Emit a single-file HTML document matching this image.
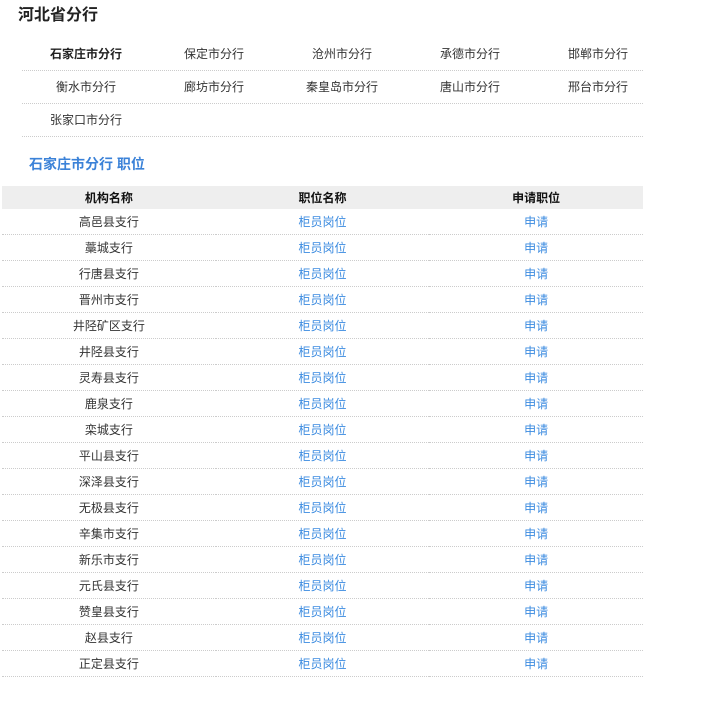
<!DOCTYPE html>
<html><head><meta charset="utf-8"><style>
body{margin:0;background:#fff;font-family:"Liberation Sans","Noto Sans CJK SC",sans-serif;font-size:12px;color:#333;}
h1{position:absolute;left:18px;top:5px;margin:0;font-size:16px;font-weight:bold;color:#222;line-height:22px;}
.grid{position:absolute;left:22px;top:38px;width:621px;}
.row{height:32px;border-bottom:1px dotted #ccc;position:relative;}
.row span{position:absolute;top:0;line-height:32px;width:128px;text-align:center;}
.b{font-weight:bold;color:#222}
h2{position:absolute;left:29px;top:153px;margin:0;font-size:14px;color:#3b82d8;font-weight:bold;line-height:22px;}
table{position:absolute;left:2px;top:186px;width:641px;border-collapse:collapse;}
th{background:#eee;height:23px;font-weight:bold;color:#111;padding:0;width:214px;}
td{height:25px;text-align:center;padding:0;border-bottom:1px dotted #ccc;}
a{color:#3b8be0;text-decoration:none}
</style></head><body>
<h1>河北省分行</h1>
<div class="grid">
<div class="row"><span class="b" style="left:0">石家庄市分行</span><span style="left:128px">保定市分行</span><span style="left:256px">沧州市分行</span><span style="left:384px">承德市分行</span><span style="left:512px">邯郸市分行</span></div>
<div class="row"><span style="left:0">衡水市分行</span><span style="left:128px">廊坊市分行</span><span style="left:256px">秦皇岛市分行</span><span style="left:384px">唐山市分行</span><span style="left:512px">邢台市分行</span></div>
<div class="row"><span style="left:0">张家口市分行</span></div>
</div>
<h2>石家庄市分行 职位</h2>
<table>
<tr><th>机构名称</th><th>职位名称</th><th>申请职位</th></tr>
<tr><td>高邑县支行</td><td><a>柜员岗位</a></td><td><a>申请</a></td></tr>
<tr><td>藁城支行</td><td><a>柜员岗位</a></td><td><a>申请</a></td></tr>
<tr><td>行唐县支行</td><td><a>柜员岗位</a></td><td><a>申请</a></td></tr>
<tr><td>晋州市支行</td><td><a>柜员岗位</a></td><td><a>申请</a></td></tr>
<tr><td>井陉矿区支行</td><td><a>柜员岗位</a></td><td><a>申请</a></td></tr>
<tr><td>井陉县支行</td><td><a>柜员岗位</a></td><td><a>申请</a></td></tr>
<tr><td>灵寿县支行</td><td><a>柜员岗位</a></td><td><a>申请</a></td></tr>
<tr><td>鹿泉支行</td><td><a>柜员岗位</a></td><td><a>申请</a></td></tr>
<tr><td>栾城支行</td><td><a>柜员岗位</a></td><td><a>申请</a></td></tr>
<tr><td>平山县支行</td><td><a>柜员岗位</a></td><td><a>申请</a></td></tr>
<tr><td>深泽县支行</td><td><a>柜员岗位</a></td><td><a>申请</a></td></tr>
<tr><td>无极县支行</td><td><a>柜员岗位</a></td><td><a>申请</a></td></tr>
<tr><td>辛集市支行</td><td><a>柜员岗位</a></td><td><a>申请</a></td></tr>
<tr><td>新乐市支行</td><td><a>柜员岗位</a></td><td><a>申请</a></td></tr>
<tr><td>元氏县支行</td><td><a>柜员岗位</a></td><td><a>申请</a></td></tr>
<tr><td>赞皇县支行</td><td><a>柜员岗位</a></td><td><a>申请</a></td></tr>
<tr><td>赵县支行</td><td><a>柜员岗位</a></td><td><a>申请</a></td></tr>
<tr><td>正定县支行</td><td><a>柜员岗位</a></td><td><a>申请</a></td></tr>
</table>
</body></html>
